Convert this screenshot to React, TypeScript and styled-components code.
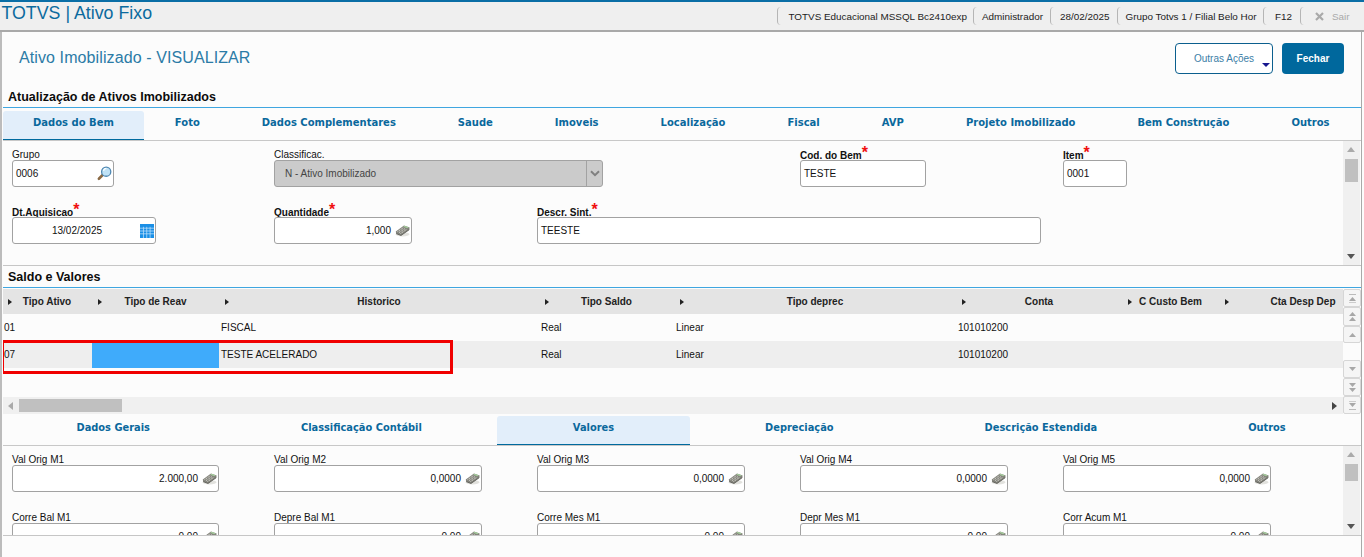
import React from "react";
import styled, { createGlobalStyle } from "styled-components";

const Global = createGlobalStyle`
  html, body { margin: 0; padding: 0; background: #fcfcfc; overflow: hidden; }
  body { font-family: "Liberation Sans", Arial, sans-serif; color: #111; }
  * { box-sizing: border-box; }
`;

const Page = styled.div`
  width: 1364px; height: 557px; display: flex; flex-direction: column; overflow: hidden;
`;
const Header = styled.header`
  height: 32px; flex: none; background: #efefef; border-top: 2px solid #0a6ea6; border-bottom: 2px solid #a9a9a9;
  display: flex; align-items: center; justify-content: space-between; padding: 0 3px 0 1.5px;
`;
const Brand = styled.div`
  font-size: 17.8px; line-height: 20px; color: #0b6a9e; margin-top: -6px;
`;
const Status = styled.div` display: flex; align-items: center; height: 100%; `;
const StatusItem = styled.div<{ $w: number; $pad: number }>`
  width: ${p => p.$w}px; height: 18px; padding-left: ${p => p.$pad}px; font-size: 9.9px; line-height: 17px; white-space: nowrap;
  color: #1c1c1c; border-left: 1px solid #b5b5b5; border-radius: 4px 0 0 4px; display: flex; align-items: center;
`;
const Exit = styled.span` color: #a9a9a9; display: flex; align-items: center; gap: 8px; `;

const Main = styled.main`
  flex: 1; min-height: 0; display: flex; flex-direction: column;
  border-left: 2px solid #bcbcbc; border-right: 1px solid #a9a9a9; margin-right: 2px; padding-left: 1px;
`;
const TitleRow = styled.div`
  height: 56px; flex: none; display: flex; align-items: flex-start; justify-content: space-between; padding: 11px 17px 0 16px;
`;
const PageTitle = styled.h1`
  margin: 6px 0 0; font-size: 16px; line-height: 18px; font-weight: 400; color: #2b7ba6; letter-spacing: 0.1px;
`;
const Actions = styled.div` display: flex; gap: 9px; `;
const OutlineButton = styled.button`
  position: relative; width: 98px; height: 31px; background: #fff; border: 1px solid #0b5f8e; border-radius: 4px;
  font: 400 10px "Liberation Sans", sans-serif; color: #3b7ea6; padding: 0;
`;
const Caret = styled.span`
  position: absolute; right: 2px; bottom: 6px; width: 0; height: 0;
  border-left: 4px solid transparent; border-right: 4px solid transparent; border-top: 4px solid #17178f;
`;
const PrimaryButton = styled.button`
  width: 62px; height: 31px; background: #00689d; border: 0; border-radius: 4px; color: #fff;
  font: 700 10px "Liberation Sans", sans-serif; padding: 0;
`;
const SectionTitle = styled.h2<{ $h: number; $lh: number }>`
  height: ${p => p.$h}px; flex: none; margin: 0; padding-left: 5px; border-bottom: 1px solid #3fa6e0;
  font-size: 12.5px; line-height: ${p => p.$lh}px; font-weight: 700; color: #0c0c0c;
`;
const TabBar = styled.nav<{ $h: number; $shift?: number }>`
  height: ${p => p.$h}px; flex: none; display: flex; border-bottom: 1px solid #c8c8c8; overflow: hidden; white-space: nowrap;
  padding-left: 0; text-indent: 0;
  & > :first-child { margin-left: ${p => p.$shift ?? 0}px; }
`;
const Tab = styled.div<{ $pad: number; $top: number; $size: number; $active?: boolean }>`
  flex: none; padding: 0 ${p => p.$pad}px; margin-top: ${p => p.$top}px; height: calc(100% - ${p => p.$top}px); display: flex; justify-content: center;
  font: 700 ${p => p.$size}px/23px "DejaVu Sans", sans-serif; color: #0a689c;
  background: ${p => (p.$active ? "#e2eefa" : "transparent")};
  border-radius: ${p => (p.$active ? "3px 3px 0 0" : "0")};
  border-bottom: ${p => (p.$active ? "1px solid #006a9e" : "0")};
`;
const FormRow = styled.section<{ $h: number; $border?: boolean }>`
  height: ${p => p.$h}px; flex: none; display: flex; overflow: hidden;
  border-bottom: ${p => (p.$border ? "1px solid #c6c6c6" : "0")};
`;
const FormGrid = styled.div<{ $top: number; $row: number }>`
  flex: 1; display: grid; grid-template-columns: 262px repeat(4, 263px); grid-auto-rows: ${p => p.$row}px;
  padding: ${p => p.$top}px 0 0 9px; min-width: 0;
`;
const Field = styled.div<{ $col: number; $w: number; $row: number }>`
  grid-column: ${p => p.$col} / span ${p => (p.$w > 263 ? 3 : 1)};
  grid-row: ${p => p.$row};
  width: ${p => p.$w}px; display: flex; flex-direction: column;
`;
const Label = styled.label<{ $req?: boolean }>`
  height: 12px; font-size: 10px; line-height: ${p => (p.$req ? 15 : 13)}px; white-space: nowrap; color: #111;
  font-weight: ${p => (p.$req ? 700 : 400)};
`;
const Star = styled.span`
  color: #f01010; font: 700 16px/10px "Liberation Sans", sans-serif; vertical-align: 1px; margin-left: 0;
`;
const InputBox = styled.div<{ $disabled?: boolean }>`
  height: 27px; flex: none; display: flex; align-items: center;
  gap: 2px; padding: 0 3px; font-size: 10px; color: #111; background: ${p => (p.$disabled ? "#cbcbcb" : "#fff")};
  border: 1px solid #a2a2a2; border-radius: 3px; overflow: hidden;
`;
const NumberBox = styled(InputBox)`
  justify-content: flex-end; gap: 4px; padding-right: 1px;
`;
const Filler = styled.span` flex: 1; `;
const SelectValue = styled.span` flex: 1; padding-left: 7px; color: #444; `;
const SelectArrow = styled.span`
  align-self: stretch; width: 16px; margin: 0 -3px 0 0; border-left: 1px solid #a2a2a2; display: flex; align-items: center; justify-content: center;
`;
const DateValue = styled.span` flex: 1; text-align: center; `;
const IconSlot = styled.span` display: flex; margin-right: -2px; `;
const VScroll = styled.div<{ $thumbTop: number; $thumbH: number }>`
  flex: none; width: 17px; background: #f0f0f0; position: relative; margin-right: 1px;
  &::after { content: ""; position: absolute; left: 2px; width: 13px; top: ${p => p.$thumbTop}px; height: ${p => p.$thumbH}px; background: #c0c0c0; }
`;
const ScrollEnd = styled.span<{ $bottom?: boolean }>`
  position: absolute; left: 4px; ${p => (p.$bottom ? "bottom: 6px" : "top: 6px")}; width: 0; height: 0;
  border-left: 4px solid transparent; border-right: 4px solid transparent;
  ${p => (p.$bottom ? "border-top: 5px solid #555" : "border-bottom: 5px solid #aaa")};
`;

const columns = "90px 127px 320px 135px 282px 166px 97px 168px";
const GridWrap = styled.section`
  height: 125px; margin-top: 1px; flex: none; display: flex; position: relative; overflow: hidden;
`;
const GridBody = styled.div` flex: 1; min-width: 0; overflow: hidden; display: flex; flex-direction: column; `;
const HeadRow = styled.div`
  height: 25px; flex: none; display: grid; grid-template-columns: ${columns}; background: #e4e4e4; width: 1385px; margin-left: -1px;
`;
const HeadCell = styled.div`
  position: relative; text-align: center; font-size: 10px; font-weight: 700; line-height: 25px; color: #222; white-space: nowrap;
  &::before { content: ""; position: absolute; left: 6px; top: 10px; border-left: 4px solid #222; border-top: 3px solid transparent; border-bottom: 3px solid transparent; }
`;
const DataRow = styled.div<{ $alt?: boolean }>`
  height: 27px; flex: none; display: grid; grid-template-columns: ${columns}; width: 1385px; margin-left: -1px;
  background: ${p => (p.$alt ? "#eeeeee" : "#fcfcfc")};
`;
const Cell = styled.div<{ $fill?: boolean }>`
  font-size: 10px; line-height: 27px; padding-left: 2px; color: #111; background: ${p => (p.$fill ? "#3fabfb" : "transparent")};
`;
const Spacer = styled.div` flex: 1; `;
const HScroll = styled.div`
  height: 17px; flex: none; background: #f0f0f0; display: flex; align-items: center; position: relative; padding-left: 16px;
`;
const HThumb = styled.div` width: 103px; height: 13px; background: #c0c0c0; `;
const HArrow = styled.span<{ $right?: boolean }>`
  position: absolute; ${p => (p.$right ? "right: 6px; border-left: 5px solid #444" : "left: 5px; border-right: 5px solid #aaa")};
  border-top: 4px solid transparent; border-bottom: 4px solid transparent;
`;
const NavColumn = styled.div` flex: none; width: 18px; display: flex; flex-direction: column; background: #fcfcfc; `;
const NavButton = styled.div<{ $h: number; $mt?: number }>`
  height: ${p => p.$h}px; margin-top: ${p => p.$mt ?? 0}px; border: 1px solid #d6d6d6; border-radius: 2px; background: #f5f5f5;
  display: flex; align-items: center; justify-content: center;
`;
const Annotation = styled.div`
  position: absolute; left: -2px; top: 51px; width: 452px; height: 34px; border: 3px solid #f00000; pointer-events: none;
`;
const Footer = styled.div`
  flex: 1; border-top: 1px solid #c6c6c6;
`;

const Lens = () => (
  <svg width="15" height="15" viewBox="0 0 16 16">
    <path d="M6 9.6 2 13.6" stroke="#8a6a45" strokeWidth="2.8" strokeLinecap="round" />
    <circle cx="9.8" cy="6" r="4.9" fill="#bfe2f6" stroke="#4f88b2" strokeWidth="1.4" />
    <path d="M7 5.2a3 3 0 0 1 3-2.6" stroke="#fff" strokeWidth="1.2" fill="none" />
  </svg>
);
const Calendar = () => (
  <svg width="14" height="14" viewBox="0 0 15 15">
    <rect width="15" height="15" fill="#1a8fe6" />
    <path d="M0 4.5h15M0 7.5h15M0 10.5h15M3.7 3v12M7.2 3v12M10.8 3v12" stroke="#bfe0fb" strokeWidth="0.8" />
  </svg>
);
const Calc = () => (
  <svg width="15" height="13" viewBox="0 0 16 13">
    <ellipse cx="8" cy="10.5" rx="7.5" ry="2.4" fill="#e2e2de" />
    <path d="M.8 7.6 9.6 1.2 15.6 3.2 15.2 5.6 6.4 11.8 1.2 9.8Z" fill="#83837b" />
    <path d="M8.8 2.4 10.4 1.5 14.6 3 13 4.2Z" fill="#a5cc9c" />
    <path d="M2.6 7.8 8.8 3.6M4.2 8.8 10.6 4.5M5.8 9.8 12.4 5.3" stroke="#dcdcd5" strokeWidth="1" strokeDasharray="1.3 0.8" />
    <path d="M1.2 9.8 6.4 11.8 15.2 5.6" stroke="#5b5b55" strokeWidth="0.9" fill="none" />
  </svg>
);
const Chevron = () => (
  <svg width="10" height="7" viewBox="0 0 10 7"><path d="M1 1.2 5 5.2 9 1.2" stroke="#808080" strokeWidth="2" fill="none" /></svg>
);
const CloseX = () => (
  <svg width="9" height="9" viewBox="0 0 9 9"><path d="M1 1l7 7M8 1 1 8" stroke="#a9a9a9" strokeWidth="2.2" /></svg>
);
const Nav = ({ up, kind }: { up: boolean; kind: "one" | "two" | "bar" }) => (
  <svg width="9" height="11" viewBox="0 0 9 11" style={{ transform: up ? "none" : "scaleY(-1)" }}>
    {kind === "bar" && <path d="M1 1.5h7" stroke="#bbb" />}
    <path d={kind === "two" ? "M4.5 1 8 5H1Z" : "M4.5 4 8 8H1Z"} fill="#a8a8a8" />
    {kind === "two" && <path d="M4.5 6 8 10H1Z" fill="#a8a8a8" />}
    {kind === "bar" && <path d="M1 9.5h7" stroke="#ccc" />}
  </svg>
);

const topTabs = ["Dados do Bem", "Foto", "Dados Complementares", "Saude", "Imoveis", "Localização", "Fiscal", "AVP", "Projeto Imobilizado", "Bem Construção", "Outros"];
const lowerTabs = ["Dados Gerais", "Classificação Contábil", "Valores", "Depreciação", "Descrição Estendida", "Outros"];
const heads = ["Tipo Ativo", "Tipo de Reav", "Historico", "Tipo Saldo", "Tipo deprec", "Conta", "C Custo Bem", "Cta Desp Dep"];
const rows = [
  { alt: false, cells: ["01", "", "FISCAL", "Real", "Linear", "101010200", "", ""] },
  { alt: true, cells: ["07", "", "TESTE ACELERADO", "Real", "Linear", "101010200", "", ""] },
];
const valueFields = [
  ["Val Orig M1", "2.000,00"], ["Val Orig M2", "0,0000"], ["Val Orig M3", "0,0000"], ["Val Orig M4", "0,0000"], ["Val Orig M5", "0,0000"],
  ["Corre Bal M1", "0,00"], ["Depre Bal M1", "0,00"], ["Corre Mes M1", "0,00"], ["Depr Mes M1", "0,00"], ["Corr Acum M1", "0,00"],
];

export default function App() {
  return (
    <Page>
      <Global />
      <Header>
        <Brand>TOTVS | Ativo Fixo</Brand>
        <Status>
          <StatusItem $w={196} $pad={10.5}>TOTVS Educacional MSSQL Bc2410exp</StatusItem>
          <StatusItem $w={77} $pad={8}>Administrador</StatusItem>
          <StatusItem $w={67} $pad={9}>28/02/2025</StatusItem>
          <StatusItem $w={146} $pad={7.5}>Grupo Totvs 1 / Filial Belo Hor</StatusItem>
          <StatusItem $w={37} $pad={11}>F12</StatusItem>
          <StatusItem $w={61} $pad={14}><Exit><CloseX />Sair</Exit></StatusItem>
        </Status>
      </Header>
      <Main>
        <TitleRow>
          <PageTitle>Ativo Imobilizado - VISUALIZAR</PageTitle>
          <Actions>
            <OutlineButton>Outras Ações<Caret /></OutlineButton>
            <PrimaryButton>Fechar</PrimaryButton>
          </Actions>
        </TitleRow>
        <SectionTitle $h={20} $lh={18}>Atualização de Ativos Imobilizados</SectionTitle>
        <TabBar $h={33}>
          {topTabs.map((t, i) => <Tab key={t} $top={3} $size={10} $pad={i === 0 ? 30 : 31} $active={i === 0}>{t}</Tab>)}
        </TabBar>
        <FormRow $h={125} $border>
          <FormGrid $top={7} $row={57}>
            <Field $col={1} $row={1} $w={102}>
              <Label>Grupo</Label>
              <InputBox>0006<Filler /><IconSlot><Lens /></IconSlot></InputBox>
            </Field>
            <Field $col={2} $row={1} $w={329}>
              <Label>Classificac.</Label>
              <InputBox $disabled><SelectValue>N - Ativo Imobilizado</SelectValue><SelectArrow><Chevron /></SelectArrow></InputBox>
            </Field>
            <Field $col={4} $row={1} $w={126}>
              <Label $req>Cod. do Bem<Star>*</Star></Label>
              <InputBox>TESTE</InputBox>
            </Field>
            <Field $col={5} $row={1} $w={64}>
              <Label $req>Item<Star>*</Star></Label>
              <InputBox>0001</InputBox>
            </Field>
            <Field $col={1} $row={2} $w={144}>
              <Label $req>Dt.Aquisicao<Star>*</Star></Label>
              <InputBox><DateValue>13/02/2025</DateValue><IconSlot><Calendar /></IconSlot></InputBox>
            </Field>
            <Field $col={2} $row={2} $w={138}>
              <Label $req>Quantidade<Star>*</Star></Label>
              <NumberBox>1,000<Calc /></NumberBox>
            </Field>
            <Field $col={3} $row={2} $w={504}>
              <Label $req>Descr. Sint.<Star>*</Star></Label>
              <InputBox>TEESTE</InputBox>
            </Field>
          </FormGrid>
          <VScroll $thumbTop={18} $thumbH={23}><ScrollEnd /><ScrollEnd $bottom /></VScroll>
        </FormRow>
        <SectionTitle $h={22} $lh={22}>Saldo e Valores</SectionTitle>
        <GridWrap>
          <GridBody>
            <HeadRow>{heads.map(h => <HeadCell key={h}>{h}</HeadCell>)}</HeadRow>
            {rows.map(r => (
              <DataRow key={r.cells[0]} $alt={r.alt}>
                {r.cells.map((c, i) => <Cell key={i} $fill={r.alt && i === 1}>{c}</Cell>)}
              </DataRow>
            ))}
            <Spacer />
            <HScroll><HArrow /><HThumb /><HArrow $right /></HScroll>
          </GridBody>
          <NavColumn>
            <NavButton $h={18}><Nav up kind="bar" /></NavButton>
            <NavButton $h={19}><Nav up kind="two" /></NavButton>
            <NavButton $h={17}><Nav up kind="one" /></NavButton>
            <NavButton $h={18} $mt={17}><Nav up={false} kind="one" /></NavButton>
            <NavButton $h={18}><Nav up={false} kind="two" /></NavButton>
            <NavButton $h={18}><Nav up={false} kind="bar" /></NavButton>
          </NavColumn>
          <Annotation />
        </GridWrap>
        <TabBar $h={32} $shift={-2}>
          {lowerTabs.map((t, i) => <Tab key={t} $top={2} $size={9.85} $pad={75.5} $active={i === 2}>{t}</Tab>)}
        </TabBar>
        <FormRow $h={89}>
          <FormGrid $top={7} $row={58}>
            {valueFields.map(([l, v], i) => (
              <Field key={l} $col={i % 5 + 1} $row={i < 5 ? 1 : 2} $w={i % 5 === 0 ? 207 : 208}>
                <Label>{l}</Label>
                <NumberBox>{v}<Calc /></NumberBox>
              </Field>
            ))}
          </FormGrid>
          <VScroll $thumbTop={18} $thumbH={17}><ScrollEnd /><ScrollEnd $bottom /></VScroll>
        </FormRow>
        <Footer />
      </Main>
    </Page>
  );
}
